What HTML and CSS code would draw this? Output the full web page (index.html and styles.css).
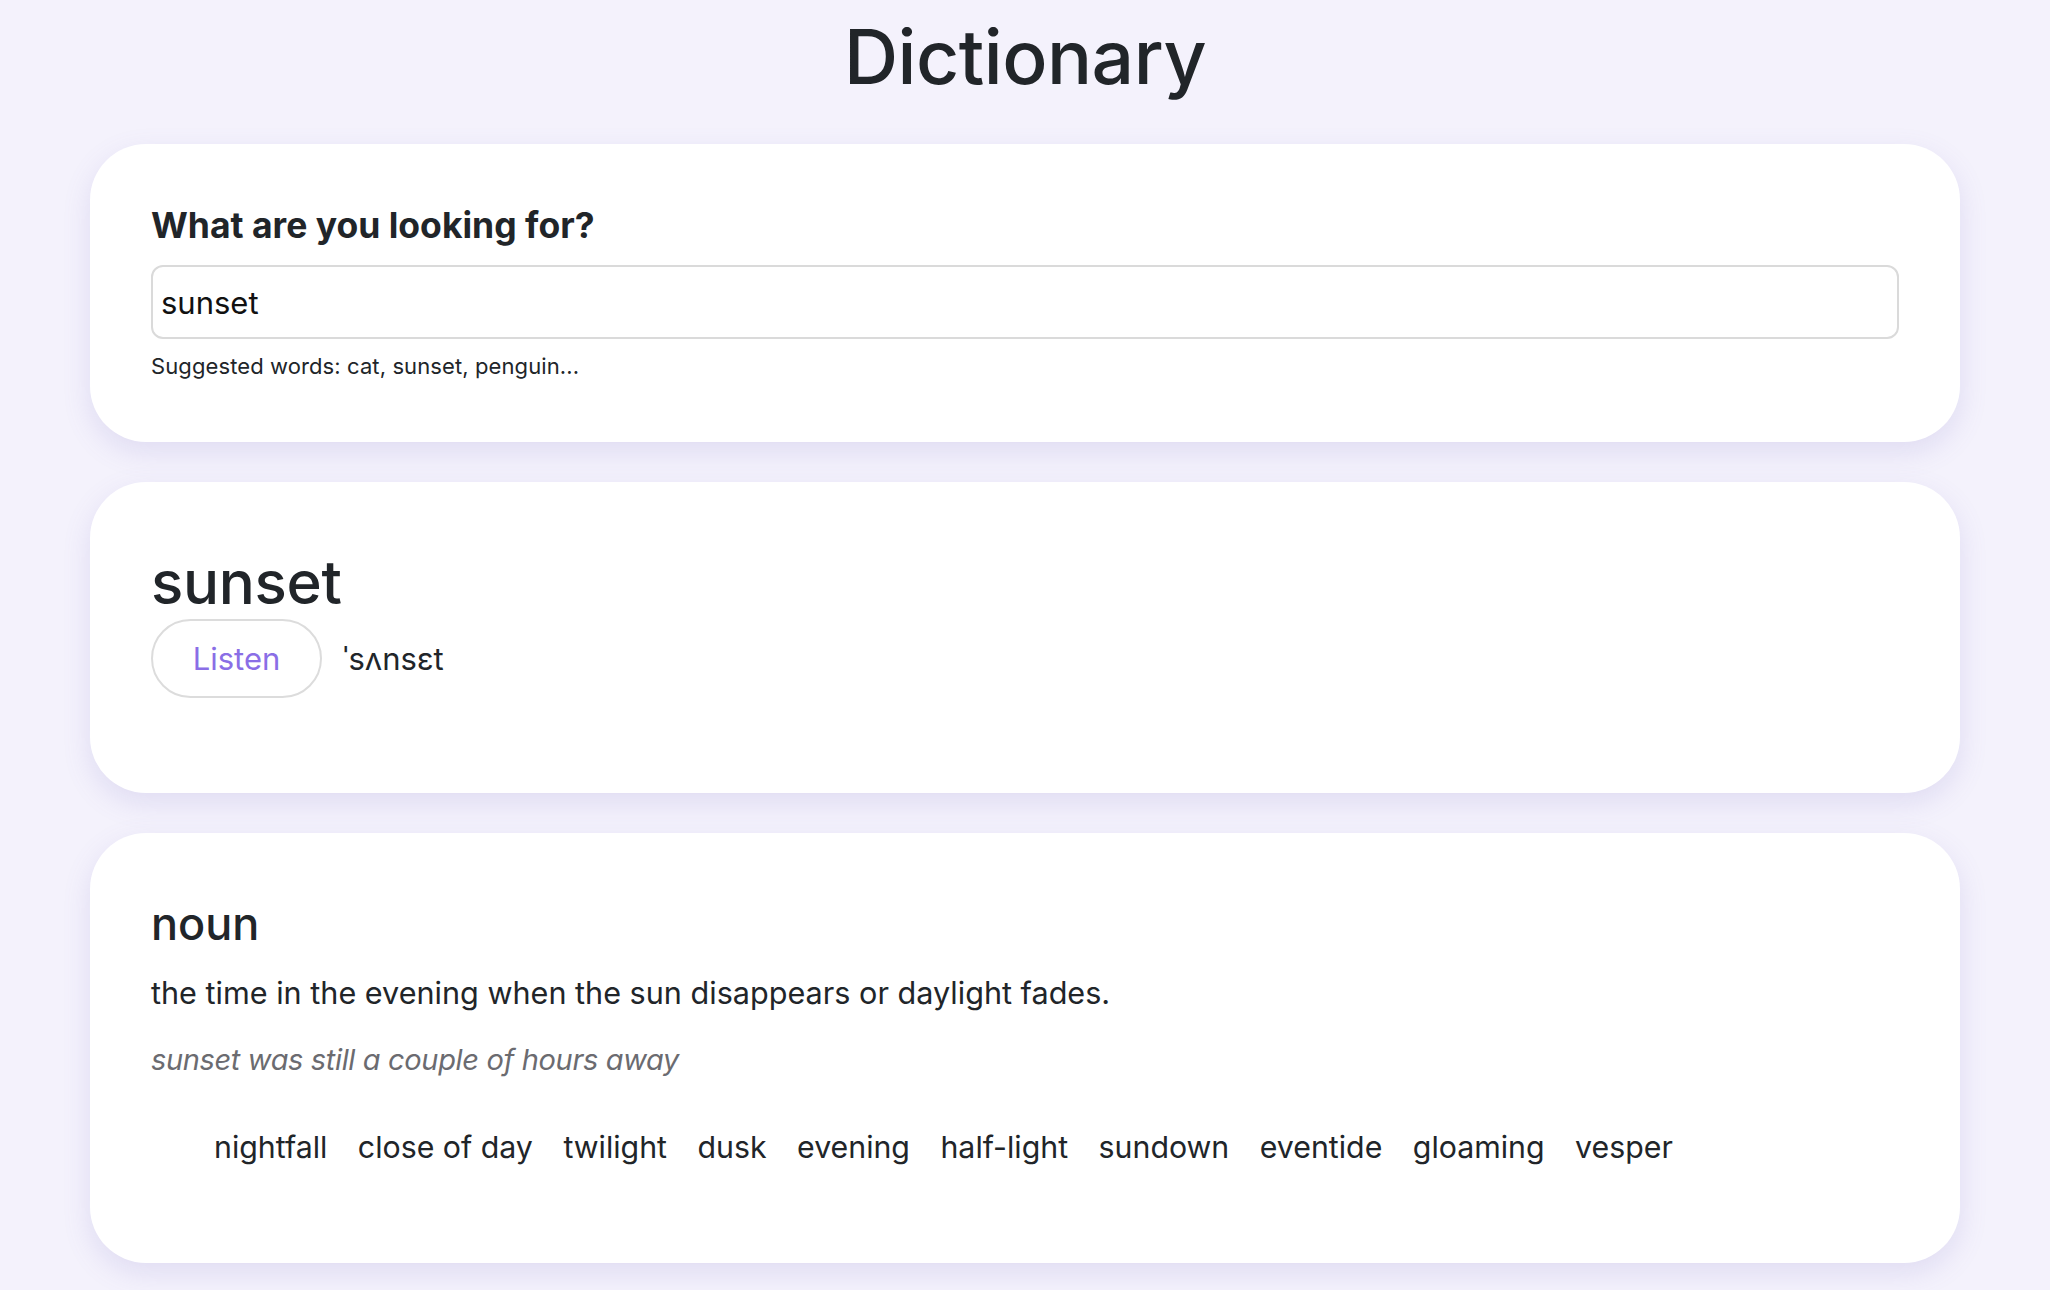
FILE: index.html
```html
<!DOCTYPE html>
<html lang="en">
<head>
<meta charset="utf-8">
<title>Dictionary</title>
<link rel="stylesheet" href="styles.css">
</head>
<body>
<main class="page">
  <h1 class="title">Dictionary</h1>

  <section class="card search-card">
    <form class="search-form">
      <label class="search-label" for="q">What are you looking for?</label>
      <input class="search-input" id="q" type="search" value="sunset">
      <p class="hint">Suggested words: cat, sunset, penguin...</p>
    </form>
  </section>

  <section class="card word-card">
    <h2 class="word">sunset</h2>
    <div class="pron-row">
      <button class="listen-btn" type="button">Listen</button>
      <span class="phonetic">ˈsʌnsɛt</span>
    </div>
  </section>

  <section class="card meaning-card">
    <h3 class="pos">noun</h3>
    <p class="definition">the time in the evening when the sun disappears or daylight fades.</p>
    <p class="example">sunset was still a couple of hours away</p>
    <ul class="synonyms">
      <li>nightfall</li>
      <li>close of day</li>
      <li>twilight</li>
      <li>dusk</li>
      <li>evening</li>
      <li>half-light</li>
      <li>sundown</li>
      <li>eventide</li>
      <li>gloaming</li>
      <li>vesper</li>
    </ul>
  </section>
</main>
</body>
</html>
```

FILE: styles.css
```css
* {
  box-sizing: border-box;
}

html, body {
  margin: 0;
  padding: 0;
}

body {
  background: #f4f2fc;
  color: #212529;
  font-family: Inter, "Noto Sans", "Liberation Sans", sans-serif;
  -webkit-font-smoothing: antialiased;
}

.page {
  width: 1870px;
  margin: 0 auto;
  padding: 10px 0 40px;
  display: flex;
  flex-direction: column;
  gap: 40px;
}

.title {
  margin: 0;
  text-align: center;
  font-size: 75px;
  font-weight: 500;
  line-height: 94px;
  letter-spacing: -0.5px;
}

.card {
  background: #ffffff;
  border-radius: 56px;
  box-shadow: 0 10px 28px rgba(120, 105, 190, 0.16);
  padding: 61px;
}

/* search card */
.search-card {
  padding-bottom: 59px;
}

.search-form {
  display: flex;
  flex-direction: column;
}

.search-label {
  font-size: 35.5px;
  font-weight: 700;
  line-height: 41px;
  margin-bottom: 19px;
}

.search-input {
  height: 74px;
  width: 100%;
  border: 2px solid #dadada;
  border-radius: 12px;
  padding: 0 8px;
  font-family: inherit;
  font-size: 31px;
  color: #111;
  background: #fff;
  outline: none;
  -webkit-appearance: none;
  appearance: none;
}

.hint {
  margin: 11px 0 0;
  font-size: 22px;
  line-height: 33px;
  letter-spacing: 0.1px;
  color: #212529;
}

/* word card */
.word-card {
  padding-top: 67px;
  padding-bottom: 95px;
}

.word {
  margin: 0;
  font-size: 60px;
  font-weight: 500;
  line-height: 67px;
  letter-spacing: -0.3px;
}

.pron-row {
  display: flex;
  align-items: center;
  gap: 21px;
  margin-top: 3px;
}

.listen-btn {
  height: 79px;
  width: 171px;
  border: 2px solid #dcdcdc;
  border-radius: 40px;
  background: #fff;
  color: #8a6ee6;
  font-family: inherit;
  font-size: 31px;
  padding: 0;
  cursor: pointer;
}

.phonetic {
  font-size: 31px;
  color: #212529;
}

/* meaning card */
.meaning-card {
  padding-top: 62px;
  padding-bottom: 93px;
}

.pos {
  margin: 0;
  font-size: 45px;
  font-weight: 500;
  line-height: 58px;
}

.definition {
  margin: 17px 0 0;
  font-size: 30.6px;
  line-height: 45px;
}

.example {
  margin: 22px 0 0;
  font-size: 29px;
  line-height: 45px;
  letter-spacing: -0.35px;
  font-style: italic;
  color: #6b6b70;
}

.synonyms {
  list-style: none;
  margin: 43px 0 0;
  padding: 0 0 0 63px;
  display: flex;
  flex-wrap: wrap;
  gap: 0 30.5px;
  font-size: 30.3px;
  line-height: 45px;
}
```
